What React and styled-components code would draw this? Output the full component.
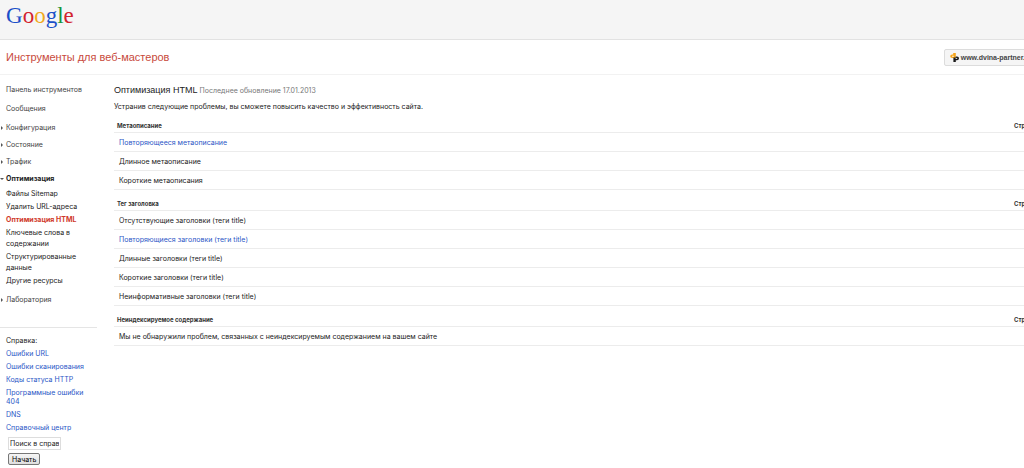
import React from 'react';
import styled, { createGlobalStyle } from 'styled-components';

const GlobalStyle = createGlobalStyle`
  * {
    box-sizing: border-box;
  }
  body {
    margin: 0;
    overflow-x: hidden;
    background: #fff;
    color: #222;
    font-family: Inter, Arial, sans-serif;
    font-size: 7px;
    line-height: 11px;
  }
`;

const logoLetters = [
  ['G', '#1b50c8'],
  ['o', '#d2232f'],
  ['o', '#f0a91c'],
  ['g', '#1b50c8'],
  ['l', '#17953b'],
  ['e', '#d2232f'],
];

const menu = [
  { title: 'Панель инструментов', plain: true },
  { title: 'Сообщения', plain: true },
  { title: 'Конфигурация' },
  { title: 'Состояние' },
  { title: 'Трафик' },
  {
    title: 'Оптимизация',
    items: [
      'Файлы Sitemap',
      'Удалить URL-адреса',
      'Оптимизация HTML',
      'Ключевые слова в содержании',
      'Структурированные данные',
      'Другие ресурсы',
    ],
  },
  { title: 'Лаборатория' },
];

const helpLinks = [
  'Ошибки URL',
  'Ошибки сканирования',
  'Коды статуса HTTP',
  'Программные ошибки 404',
  'DNS',
  'Справочный центр',
];

const sections = [
  {
    title: 'Метаописание',
    rows: [
      { text: 'Повторяющееся метаописание', link: true },
      { text: 'Длинное метаописание' },
      { text: 'Короткие метаописания' },
    ],
  },
  {
    title: 'Тег заголовка',
    rows: [
      { text: 'Отсутствующие заголовки (теги title)' },
      { text: 'Повторяющиеся заголовки (теги title)', link: true },
      { text: 'Длинные заголовки (теги title)' },
      { text: 'Короткие заголовки (теги title)' },
      { text: 'Неинформативные заголовки (теги title)' },
    ],
  },
  {
    title: 'Неиндексируемое содержание',
    rows: [
      {
        text:
          'Мы не обнаружили проблем, связанных с неиндексируемым содержанием на вашем сайте',
      },
    ],
  },
];

const SiteIcon = () => (
  <svg width="9" height="9" viewBox="0 0 9 9" aria-hidden="true">
    <path
      d="M3.2 0h2.6v5H2.2Q.2 5 .2 3.2T2.2 1.4h1z"
      fill="#f5a51b"
    />
    <path
      d="M3.4 9V4.6H5.8V3.4h1.2Q9 3.4 9 5.3T7 7.2H5.8V9z"
      fill="#1a1a1a"
    />
    <path d="M2.2 2.8h1.6v.9H2.2z" fill="#fff" />
    <path d="M5.6 4.9h1.6v.9H5.6z" fill="#fff" />
  </svg>
);

const Arrow = ({ open }) => (
  <svg width="4" height="4" viewBox="0 0 4 4" aria-hidden="true">
    <path d={open ? 'M0 1h4L2 3z' : 'M1 0v4l2-2z'} fill="#555" />
  </svg>
);

const App = () => (
  <Page>
    <GlobalStyle />
    <Header>
      <Logo href="#home">
        {logoLetters.map(([letter, color], i) => (
          <Letter key={i} $color={color}>
            {letter}
          </Letter>
        ))}
      </Logo>
    </Header>
    <TitleBar>
      <ProductName>Инструменты для веб-мастеров</ProductName>
      <SiteButton type="button">
        <SiteIcon />
        www.dvina-partner.ru
      </SiteButton>
    </TitleBar>
    <Body>
      <Sidebar>
        <Nav>
          {menu.map(group => (
            <Group key={group.title} $plain={group.plain}>
              <GroupLink href="#menu" $bold={!!group.items}>
                <ArrowBox>
                  {!group.plain && <Arrow open={!!group.items} />}
                </ArrowBox>
                {group.title}
              </GroupLink>
              {group.items && (
                <SubMenu>
                  {group.items.map(item => (
                    <li key={item}>
                      <SubLink href="#item" $active={item === 'Оптимизация HTML'}>
                        {item}
                      </SubLink>
                    </li>
                  ))}
                </SubMenu>
              )}
            </Group>
          ))}
        </Nav>
        <Help>
          <HelpTitle>Справка:</HelpTitle>
          {helpLinks.map(link => (
            <HelpLink key={link} href="#help">
              {link}
            </HelpLink>
          ))}
          <SearchForm onSubmit={e => e.preventDefault()}>
            <SearchInput
              type="text"
              aria-label="Поиск в справке"
              defaultValue="Поиск в справке"
            />
            <SearchButton type="submit">Начать</SearchButton>
          </SearchForm>
        </Help>
      </Sidebar>
      <Main>
        <Heading>
          Оптимизация HTML <Updated>Последнее обновление 17.01.2013</Updated>
        </Heading>
        <Intro>
          Устранив следующие проблемы, вы сможете повысить качество и
          эффективность сайта.
        </Intro>
        {sections.map(section => (
          <Table key={section.title}>
            <thead>
              <tr>
                <HeadCell>{section.title}</HeadCell>
                <PagesCell>Страницы</PagesCell>
              </tr>
            </thead>
            <tbody>
              {section.rows.map(row => (
                <tr key={row.text}>
                  <Cell colSpan={2}>
                    {row.link ? <RowLink href="#row">{row.text}</RowLink> : row.text}
                  </Cell>
                </tr>
              ))}
            </tbody>
          </Table>
        ))}
      </Main>
    </Body>
  </Page>
);

const Page = styled.div`
  overflow: hidden;
`;

const Header = styled.header`
  height: 40px;
  padding: 3px 6px;
  background: #f5f5f5;
  border-bottom: 1px solid #e2e2e2;
`;

const Logo = styled.a`
  font-family: 'Liberation Serif', serif;
  font-size: 23px;
  line-height: 26px;
  text-decoration: none;
`;

const Letter = styled.span`
  color: ${props => props.$color};
`;

const TitleBar = styled.div`
  display: flex;
  align-items: center;
  justify-content: space-between;
  height: 35px;
  padding-left: 6px;
  border-bottom: 1px solid #f2f2f2;
`;

const ProductName = styled.h1`
  margin: 0;
  color: #c84a3c;
  font-family: 'Liberation Sans', Arial, sans-serif;
  font-size: 11px;
  font-weight: normal;
`;

/* the site picker runs past the right edge of the window */
const SiteButton = styled.button`
  display: flex;
  align-items: center;
  flex: none;
  gap: 2px;
  height: 17px;
  margin-right: -14px;
  padding: 0 5px;
  background: #f5f5f5;
  border: 1px solid #dcdcdc;
  border-radius: 2px;
  color: #444;
  font-family: 'Liberation Sans', Arial, sans-serif;
  font-size: 7px;
  font-weight: bold;
`;

const Body = styled.div`
  display: flex;
`;

const Sidebar = styled.aside`
  flex: none;
  width: 97px;
  padding-top: 9px;
`;

const Nav = styled.ul`
  margin: 0;
  padding: 0 0 16px;
  list-style: none;
`;

const Group = styled.li`
  padding-bottom: ${props => (props.$plain ? '8px' : '6px')};
`;

const GroupLink = styled.a`
  display: flex;
  align-items: center;
  color: ${props => (props.$bold ? '#222' : '#444')};
  font-weight: ${props => (props.$bold ? 'bold' : 'normal')};
  text-decoration: none;
`;

const ArrowBox = styled.span`
  display: flex;
  width: 6px;
`;

const SubMenu = styled.ul`
  margin: 0;
  padding: 4px 12px 0 6px;
  list-style: none;
`;

const SubLink = styled.a`
  display: block;
  padding-bottom: 2px;
  color: ${props => (props.$active ? '#d03a2b' : '#222')};
  font-weight: ${props => (props.$active ? 'bold' : 'normal')};
  text-decoration: none;
`;

const Help = styled.div`
  padding: 7px 12px 0 6px;
  border-top: 1px solid #e5e5e5;
`;

const HelpTitle = styled.div`
  padding-bottom: 1px;
`;

const HelpLink = styled.a`
  display: block;
  padding: 2px 0;
  color: #2a56c6;
  line-height: 9px;
  text-decoration: none;
`;

const SearchForm = styled.form`
  display: flex;
  flex-direction: column;
  align-items: flex-start;
  gap: 3px;
  padding: 3px 2px;
`;

const SearchInput = styled.input`
  width: 53px;
  height: 13px;
  padding: 0 1px;
  border: 1px solid #ddd;
  color: #222;
  font-family: inherit;
  font-size: 7px;
`;

const SearchButton = styled.button`
  height: 12px;
  padding: 0 3px;
  background: linear-gradient(#f6f6f6, #dedede);
  border: 1px solid #777;
  border-radius: 2px;
  color: #000;
  font-family: inherit;
  font-size: 7px;
  line-height: 9px;
`;

const Main = styled.main`
  flex: 1;
  min-width: 0;
  padding: 9px 0 0 17px;
`;

const Heading = styled.h2`
  margin: 0;
  font-family: 'Liberation Sans', Arial, sans-serif;
  font-size: 9px;
  font-weight: normal;
  line-height: 13px;
`;

const Updated = styled.small`
  color: #777;
  font-family: Inter, Arial, sans-serif;
  font-size: 7px;
`;

const Intro = styled.p`
  margin: 4px 0 0;
`;

const Table = styled.table`
  width: 100%;
  table-layout: fixed;
  border-collapse: separate;
  border-spacing: 0;
`;

const HeadCell = styled.th`
  height: 21px;
  padding: 0 3px 2px;
  border-bottom: 1px solid #ececec;
  color: #333;
  font-size: 6px;
  line-height: 9px;
  text-align: left;
  vertical-align: bottom;
  white-space: nowrap;
`;

const PagesCell = styled(HeadCell)`
  width: 13px;
`;

const Cell = styled.td`
  height: 19px;
  padding: 0 5px;
  border-bottom: 1px solid #ececec;
`;

const RowLink = styled.a`
  color: #2a56c6;
  text-decoration: none;
`;

export default App;
